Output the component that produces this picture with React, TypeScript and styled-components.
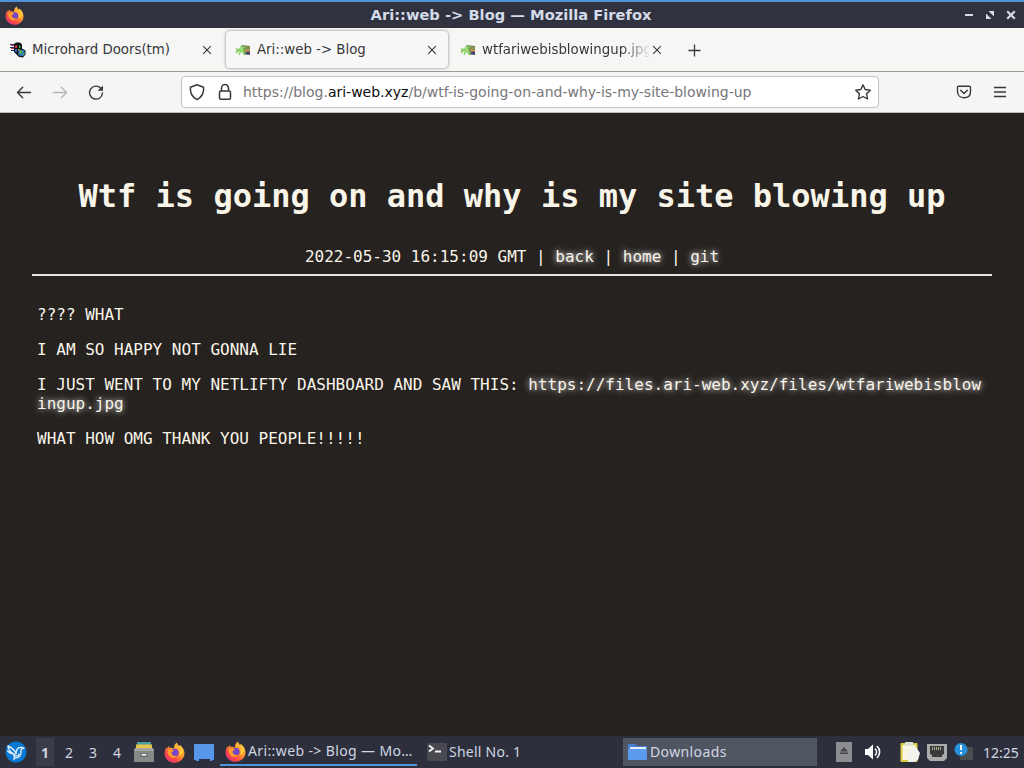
import React from "react";
import styled, { createGlobalStyle } from "styled-components";

const GlobalStyle = createGlobalStyle`
  * { box-sizing: border-box; }
  html, body { margin: 0; padding: 0; }
  body { width: 1024px; height: 768px; overflow: hidden; background: #252220; }
`;

const Desktop = styled.div`
  display: flex;
  flex-direction: column;
  width: 1024px;
  height: 768px;
  font-family: "DejaVu Sans", sans-serif;
`;

const TitleBar = styled.header`
  display: grid;
  grid-template-columns: 80px 1fr 80px;
  align-items: center;
  height: 28px;
  border-top: 2px solid #5294d8;
  background: #30333f;
  color: #d4dbea;
  padding: 0 7px 0 5px;
`;

const WindowTitle = styled.div`
  text-align: center;
  font-size: 14.67px;
  font-weight: bold;
  line-height: 24px;
  white-space: nowrap;
`;

const WindowButtons = styled.div`
  display: flex;
  justify-content: flex-end;
  gap: 9px;
`;

const TabStrip = styled.nav`
  display: flex;
  align-items: center;
  height: 44px;
  background: #f6f6f5;
  border-bottom: 1px solid #9b9b95;
`;

const TabBox = styled.div<{ $active?: boolean }>`
  display: flex;
  align-items: center;
  width: ${(p) => (p.$active ? 222 : 225)}px;
  height: 37px;
  padding: 0 ${(p) => (p.$active ? 8 : 10)}px 0 ${(p) => (p.$active ? 9 : 10)}px;
  margin: 0 ${(p) => (p.$active ? "2px 0 1px" : "0")};
  border-radius: 4px;
  background: ${(p) => (p.$active ? "#f7f7f7" : "transparent")};
  box-shadow: ${(p) => (p.$active ? "0 0 3px rgba(0,0,0,.5)" : "none")};
`;

const TabLabel = styled.span<{ $fade?: boolean }>`
  flex: 1;
  min-width: 0;
  margin-left: 6px;
  overflow: hidden;
  white-space: nowrap;
  font-size: 13.33px;
  line-height: 20px;
  color: #38373a;
  mask-image: ${(p) => (p.$fade ? "linear-gradient(to right, #000 83%, transparent 102%)" : "none")};
`;

const NavBar = styled.div`
  display: flex;
  align-items: center;
  height: 41px;
  padding: 0 15px 0 15px;
  background: #f6f5f4;
  border-bottom: 1px solid #bdbbb8;
  color: #38373a;
`;

const NavButtons = styled.div`
  display: flex;
  gap: 18px;
  width: 166px;
`;

const AddressBar = styled.div`
  display: flex;
  align-items: center;
  width: 698px;
  height: 32px;
  padding: 0 6px 0 6px;
  border: 1px solid #c6c4c1;
  border-radius: 4px;
  background: #fff;
`;

const AddressIcons = styled.div`
  display: flex;
  gap: 10px;
`;

const Url = styled.span`
  flex: 1;
  margin-left: 9px;
  font-size: 14px;
  line-height: 20px;
  white-space: nowrap;
  color: #77767a;
  b { font-weight: normal; color: #0c0c0d; }
`;

const NavActions = styled.div`
  display: flex;
  gap: 18px;
  margin-left: auto;
`;

const Page = styled.main`
  flex: 1;
  padding: 64px 32px 0;
  background: #262220;
  color: #f9f5e9;
  font-family: "DejaVu Sans Mono", monospace;
  font-size: 16px;
  line-height: 19px;
`;

const Heading = styled.h1`
  margin: 0;
  text-align: center;
  font-size: 32px;
  line-height: 38px;
`;

const Meta = styled.div`
  margin-top: 32px;
  padding-bottom: 8px;
  text-align: center;
  border-bottom: 2px solid #e9e4d8;
`;

const Glow = styled.a`
  color: inherit;
  text-shadow: 0 0 6px #fff;
  word-break: break-all;
`;

const Article = styled.article`
  padding: 13px 5px 0;
  p { margin: 16px 0; }
`;

const Taskbar = styled.footer`
  display: flex;
  align-items: center;
  height: 32px;
  background: #2d303c;
  color: #d0d6e2;
  font-family: "Noto Sans", sans-serif;
  font-size: 14px;
`;

const Launcher = styled.div`
  display: flex;
  width: 36px;
  padding-left: 5px;
`;

const Workspace = styled.span<{ $current?: boolean }>`
  width: ${(p) => (p.$current ? 18 : 24)}px;
  height: 28px;
  margin-right: ${(p) => (p.$current ? 3 : 0)}px;
  text-align: center;
  line-height: 29px;
  font-weight: ${(p) => (p.$current ? "bold" : "normal")};
  background: ${(p) => (p.$current ? "#3a3c47" : "transparent")};
`;

const QuickLaunch = styled.div`
  display: flex;
  align-items: center;
  gap: 9px;
  width: 91px;
  padding-left: 4px;
`;

const Task = styled.div<{ $w: number; $gap?: number; $state?: "active" | "raised" }>`
  display: flex;
  align-items: center;
  gap: 2px;
  width: ${(p) => p.$w}px;
  height: 28px;
  margin-right: ${(p) => p.$gap ?? 0}px;
  padding-left: 5px;
  white-space: nowrap;
  line-height: 24px;
  letter-spacing: ${(p) => (p.$state ? 0.38 : 0.25)}px;
  background: ${(p) => (p.$state === "raised" ? "#505562" : "transparent")};
  border-bottom: ${(p) => (p.$state === "active" ? "2px solid #5294d8" : "0")};
`;

const Tray = styled.div`
  display: flex;
  align-items: center;
  margin-left: auto;
  padding-right: 3px;
`;

const TrayItem = styled.span<{ $w: number }>`
  display: flex;
  width: ${(p) => p.$w}px;
`;

const Clock = styled.time`
  width: 38px;
  white-space: nowrap;
`;

const FirefoxLogo = ({ id, size }: { id: string; size: number }) => (
  <svg width={size} height={size} viewBox="0 0 20 20">
    <defs>
      <linearGradient id={id} x1="1" y1="0" x2="0.2" y2="1">
        <stop offset="0" stopColor="#ffe34a" />
        <stop offset=".45" stopColor="#ff9a2d" />
        <stop offset=".75" stopColor="#fb4a47" />
        <stop offset="1" stopColor="#e3327c" />
      </linearGradient>
    </defs>
    <path fill={`url(#${id})`} d="M12.200.5c.3 1.700 1.300 2.500 2.400 3.700.3-.6.300-1.100.2-1.600 2.900 2 4.700 4.700 4.700 8.200 0 5.100-4.100 9-9.400 9S.6 15.800.6 10.900c0-2.600.8-4.500 2-6.200l.4 1.500c.4-.9.9-1.900 1.800-2.500 0 .8.300 1.500.9 1.900 1.400-.3 2.600.1 3.600.8C9.400 3.900 10.300 1.900 12.200.5z" />
    <circle cx="10.200" cy="10.200" r="3.700" fill="#7645c8" />
    <path fill="#ff9c2b" d="M3.400 7.500c2.200-.7 3.900-.3 5.900.2-.3 1.500-1.400 1.700-2.300 2.300.4 2.600 3 4 5.500 2.800-1.500 3-6.300 2.900-8-.3-.8-1.600-1.300-3.300-1.100-5z" />
    <path fill="#ffd83f" d="M12.200.5c.3 2.600 4.800 4.100 5 8.600-.9-1.300-1.800-1.900-2.600-2.100 1.300 2.500.7 5.500-.8 7 5.500-2.400 4-7.700 1.800-9.700C14 2.800 12.700 2 12.200.5z" />
  </svg>
);

const Minimize = () => (
  <svg width="12" height="12" viewBox="0 0 12 12"><path d="M2 6h8" stroke="#d4dbea" strokeWidth="2" /></svg>
);
const Maximize = () => (
  <svg width="12" height="12" viewBox="0 0 12 12"><path d="M4.500 2H10v5.500zM2 4.500L7.500 10H2z" fill="#d4dbea" /></svg>
);
const CloseWindow = () => (
  <svg width="12" height="12" viewBox="0 0 12 12"><path d="M2.200 2.200l7.600 7.600m0-7.600l-7.600 7.600" stroke="#d4dbea" strokeWidth="2.200" /></svg>
);
const TabClose = () => (
  <svg width="16" height="16" viewBox="0 0 16 16"><path d="M4.200 4.200l7.600 7.600m0-7.600l-7.600 7.600" stroke="#38373a" strokeWidth="1.100" /></svg>
);

const DoorsIcon = () => (
  <svg width="16" height="16" viewBox="0 0 16 16">
    <path d="M0 2.500h5M0 5.500h4M1 8.500h3" stroke="#232a72" strokeWidth="1" />
    <path d="M1 3.500h4M1 6.500h4" stroke="#c33358" strokeWidth="1" />
    <path d="M4 2l2-1.500h4l2 2v4l3.500 2v4L13 15.500 9 15l-3-3-2-2z" fill="#0d1216" />
    <path d="M5 4l2-1v3H5z" fill="#db343d" />
    <path d="M9 3l1.500 1v2H9z" fill="#3da853" />
    <path d="M5 7h2v3H5z" fill="#375fce" />
    <path d="M8 7l1.500 0v1.500H8z" fill="#e0c53e" />
    <circle cx="11.500" cy="11" r="3.300" fill="#2a75b8" />
    <path d="M9 9l2.500-1 1 2-2 2.500zM12 12.500l2.500-2-.8 2.800z" fill="#5cb55a" />
  </svg>
);

const AriIcon = () => (
  <svg width="16" height="16" viewBox="0 0 16 16">
    <path d="M7 3l8 1v8l-6 1z" fill="#70834c" />
    <path d="M9 4l6 1v3H9z" fill="#879454" />
    <path d="M9 9h6v4l-5-1z" fill="#454170" />
    <path d="M10 8h5v1.500h-5z" fill="#d9984e" />
    <path d="M1 11l4-4 2-4M1 7l5 1 5 3M4 13l2-5 4-4M1 9l5-1 4 5" fill="none" stroke="#87cf64" strokeWidth="1.400" />
    <path d="M5 7l3-1 1 3-3 1z" fill="#9be177" />
  </svg>
);

const NewTab = styled.button`
  display: flex;
  margin: 0 0 0 11px;
  padding: 0;
  border: 0;
  background: none;
`;

const Plus = () => (
  <svg width="16" height="16" viewBox="0 0 16 16"><path d="M8.500 2.500v12M2.500 8.500h12" stroke="#38373a" strokeWidth="1.300" /></svg>
);

const Arrow = ({ forward }: { forward?: boolean }) => (
  <svg width="18" height="18" viewBox="0 0 18 18" fill="none" stroke={forward ? "#b7b6b5" : "#38373a"} strokeWidth="1.400" strokeLinecap="round" strokeLinejoin="round">
    <path d={forward ? "M2.500 9.500h13M10.300 4.300l5.200 5.200-5.200 5.200" : "M15.500 9.500h-13M7.700 4.300L2.500 9.500l5.200 5.200"} />
  </svg>
);

const Reload = () => (
  <svg width="18" height="18" viewBox="0 0 18 18" fill="none" stroke="#38373a" strokeWidth="1.400" strokeLinecap="round">
    <path d="M13.800 5.200A6.500 6.500 0 1 0 15.500 10" /><path d="M16 2.500v5.300h-5.300z" fill="#38373a" stroke="none" />
  </svg>
);

const Shield = () => (
  <svg width="18" height="18" viewBox="0 0 18 18" fill="none" stroke="#38373a" strokeWidth="1.500" strokeLinejoin="round">
    <path d="M9 1.700l6.600 2.500c.5 5.500-1.700 9.800-6.600 12.400C4.100 14 1.900 9.700 2.400 4.200z" />
  </svg>
);

const Lock = () => (
  <svg width="18" height="18" viewBox="0 0 18 18" fill="none" stroke="#38373a" strokeWidth="1.500">
    <rect x="3.500" y="8" width="11" height="8.200" rx="1.500" /><path d="M5.500 8V5a3.500 3.500 0 0 1 7 0v3" />
  </svg>
);

const Star = () => (
  <svg width="18" height="18" viewBox="0 0 18 18" fill="none" stroke="#38373a" strokeWidth="1.400" strokeLinejoin="round">
    <path d="M9 1.800l2.200 4.700 5.100.7-3.700 3.600.9 5.200L9 13.500 4.500 16l.9-5.200-3.700-3.600 5.100-.7z" />
  </svg>
);

const Pocket = () => (
  <svg width="18" height="18" viewBox="0 0 18 18" fill="none" stroke="#38373a" strokeWidth="1.400" strokeLinecap="round" strokeLinejoin="round">
    <path d="M3.800 3.200h10.400c.9 0 1.300.5 1.300 1.300v4c0 4-2.700 6.200-6.500 6.200s-6.500-2.200-6.500-6.200v-4c0-.8.4-1.300 1.300-1.300z" /><path d="M5.700 7.300L9 10.500l3.300-3.200" />
  </svg>
);

const Menu = () => (
  <svg width="18" height="18" viewBox="0 0 18 18"><path d="M3 4.500h12M3 9h12M3 13.500h12" stroke="#38373a" strokeWidth="1.400" /></svg>
);

const LubuntuLogo = () => (
  <svg width="22" height="22" viewBox="0 0 22 22">
    <circle cx="11" cy="11" r="10.500" fill="#0878d2" />
    <path d="M3 4.800c2.500 1.400 6.500 3.600 8 7.200M2.600 10c2 2 4.400 3 7.400 3M3 4.800c.2 3.200 1.800 5.700 4.600 7.400" fill="none" stroke="#ddecf7" strokeWidth="1.400" strokeLinecap="round" />
    <path d="M11 12.500c.3-3.500 1.500-6 4.500-6.200 1-.1 1.800.5 3.800 1-2.500.1-3.600.9-3.300 3 .4 4-2 6.800-6.500 6.800" fill="none" stroke="#ddecf7" strokeWidth="1.500" strokeLinecap="round" />
    <path d="M8.500 13.500c1 1.300 1.300 3 .5 5.200M10 14.500c1.500 1 3.400.3 4-1.500" fill="none" stroke="#ddecf7" strokeWidth="1.300" strokeLinecap="round" />
  </svg>
);

const Cabinet = () => (
  <svg width="22" height="22" viewBox="0 0 22 22">
    <path d="M4 1h14v4H4z" fill="#4aa0a2" /><path d="M3 3.500h16V8H3z" fill="#e5c74d" />
    <path d="M2 7h18l1 3v11H1V10z" fill="#868a86" /><path d="M2 7h18l1 3H1z" fill="#a3a6a1" />
    <rect x="7" y="12" width="8" height="4" rx="1" fill="#6a6c69" /><path d="M8.500 13h5v1.500h-5z" fill="#fff" />
  </svg>
);

const DesktopIcon = () => (
  <svg width="20" height="18" viewBox="0 0 20 18"><path d="M0 1h20v16h-2v1h-2v-2H5v2H2v-1H0z" fill="#5797ea" /></svg>
);

const Terminal = () => (
  <svg width="20" height="20" viewBox="0 0 20 20">
    <rect width="20" height="18" rx="1" y="1" fill="#484a50" />
    <path d="M2 3.500l4 3L2 9.500M8 9.500h6" fill="none" stroke="#f5f5f5" strokeWidth="1.900" />
  </svg>
);

const Folder = () => (
  <svg width="20" height="20" viewBox="0 0 20 20">
    <path d="M0 3V2h7l2 2h10v14H0z" fill="#477fd0" /><path d="M2 5h16v3H2z" fill="#e4effc" /><path d="M0 7h19v11H0z" fill="#5b9bed" />
  </svg>
);

const Eject = () => (
  <svg width="16" height="20" viewBox="0 0 16 20"><path d="M0 0h16v20H0z" fill="#8c8d8e" /><path d="M8 5l4 4.500H4zM4 10.500h8V12H4z" fill="#45474c" /></svg>
);

const Volume = () => (
  <svg width="18" height="18" viewBox="0 0 18 18">
    <path d="M1 6h3l5-4.500v15L4 12H1z" fill="#fff" /><path d="M11 5.500c2 2 2 5 0 7M13 3c3.500 3.500 3.500 8.500 0 12" fill="none" stroke="#fff" strokeWidth="1.600" />
  </svg>
);

const Clipboard = () => (
  <svg width="21" height="22" viewBox="0 0 21 22">
    <rect x=".5" y="2" width="17" height="19" rx="1" fill="#d9cd45" /><path d="M2.500 4h13v15h-13z" fill="#f7f5df" />
    <path d="M5 1h8v4H5z" fill="#dedfd5" /><path d="M8 10l4-1 1-3h3l4 6-2 7-4 2H8z" fill="#f2f2ed" />
  </svg>
);

const Network = () => (
  <svg width="20" height="20" viewBox="0 0 20 20">
    <path d="M0 2h20v14l-3 3H3l-3-3z" fill="#aaaca9" /><path d="M3 4h14v8l-2 1v2H5v-2l-2-1z" fill="#383a3c" />
    <path d="M5.500 5v3M7.500 5v3M9.500 5v3M11.500 5v3M13.500 5v3" stroke="#cac69c" strokeWidth=".8" />
  </svg>
);

const Notice = () => (
  <svg width="20" height="20" viewBox="0 0 20 20">
    <path d="M6 5h13v13H6z" fill="#484d50" />
    <circle cx="7" cy="7.500" r="6.500" fill="#2790dc" /><path d="M7 3v5M7 10v2" stroke="#fff" strokeWidth="2" />
  </svg>
);

export default function App() {
  return (
    <Desktop>
      <GlobalStyle />
      <TitleBar>
        <FirefoxLogo id="title-flame" size={19} />
        <WindowTitle>Ari::web -&gt; Blog — Mozilla Firefox</WindowTitle>
        <WindowButtons><Minimize /><Maximize /><CloseWindow /></WindowButtons>
      </TitleBar>
      <TabStrip>
        <TabBox><DoorsIcon /><TabLabel>Microhard Doors(tm)</TabLabel><TabClose /></TabBox>
        <TabBox $active><AriIcon /><TabLabel>Ari::web -&gt; Blog</TabLabel><TabClose /></TabBox>
        <TabBox><AriIcon /><TabLabel $fade>wtfariwebisblowingup.jpg</TabLabel><TabClose /></TabBox>
        <NewTab><Plus /></NewTab>
      </TabStrip>
      <NavBar>
        <NavButtons><Arrow /><Arrow forward /><Reload /></NavButtons>
        <AddressBar>
          <AddressIcons><Shield /><Lock /></AddressIcons>
          <Url>https://blog.<b>ari-web.xyz</b>/b/wtf-is-going-on-and-why-is-my-site-blowing-up</Url>
          <Star />
        </AddressBar>
        <NavActions><Pocket /><Menu /></NavActions>
      </NavBar>
      <Page>
        <Heading>Wtf is going on and why is my site blowing up</Heading>
        <Meta>2022-05-30 16:15:09 GMT | <Glow>back</Glow> | <Glow>home</Glow> | <Glow>git</Glow></Meta>
        <Article>
          <p>???? WHAT</p>
          <p>I AM SO HAPPY NOT GONNA LIE</p>
          <p>I JUST WENT TO MY NETLIFTY DASHBOARD AND SAW THIS: <Glow>https://files.ari-web.xyz/files/wtfariwebisblowingup.jpg</Glow></p>
          <p>WHAT HOW OMG THANK YOU PEOPLE!!!!!</p>
        </Article>
      </Page>
      <Taskbar>
        <Launcher><LubuntuLogo /></Launcher>
        <Workspace $current>1</Workspace>
        <Workspace>2</Workspace>
        <Workspace>3</Workspace>
        <Workspace>4</Workspace>
        <QuickLaunch><Cabinet /><FirefoxLogo id="launch-flame" size={21} /><DesktopIcon /></QuickLaunch>
        <Task $w={197} $gap={5} $state="active"><FirefoxLogo id="task-flame" size={21} />Ari::web -&gt; Blog — Mo…</Task>
        <Task $w={201}><Terminal />Shell No. 1</Task>
        <Task $w={194} $state="raised"><Folder />Downloads</Task>
        <Tray>
          <TrayItem $w={28}><Eject /></TrayItem>
          <TrayItem $w={36}><Volume /></TrayItem>
          <TrayItem $w={27}><Clipboard /></TrayItem>
          <TrayItem $w={27}><Network /></TrayItem>
          <TrayItem $w={29}><Notice /></TrayItem>
          <Clock>12:25</Clock>
        </Tray>
      </Taskbar>
    </Desktop>
  );
}
